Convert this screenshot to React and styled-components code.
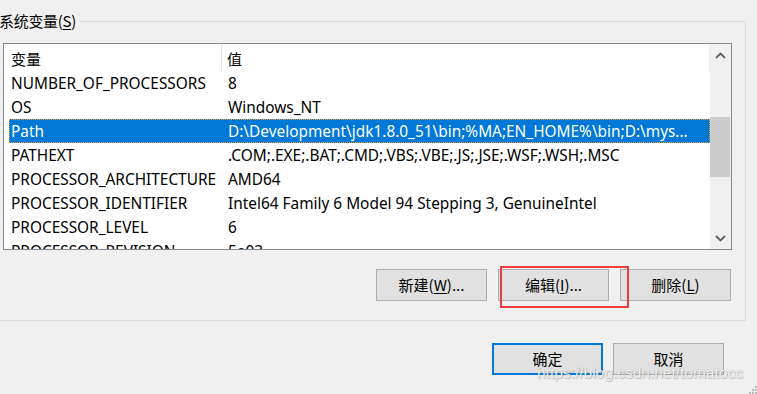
import React from "react";
import styled, { createGlobalStyle } from "styled-components";

const Global = createGlobalStyle`
  html, body { margin: 0; padding: 0; background: #f0f0f0; overflow: hidden; }
  body { font-family: "Noto Sans", "Noto Sans CJK SC", sans-serif; }
`;

const FONT = `"Noto Sans", "Noto Sans CJK SC", sans-serif`;

const Page = styled.div`
  position: relative;
  width: 757px;
  height: 394px;
  background: #f0f0f0;
  overflow: hidden;
  font-family: ${FONT};
  font-size: 15px;
  color: #000;
`;

const GroupBox = styled.div`
  position: relative;
  margin: 21px 0 0 -12px;
  width: 758px;
  height: 300px;
  border: 1px solid #dcdcdc;
  padding: 21px 15px 0 14px;
  box-sizing: border-box;
  display: flex;
  flex-direction: column;
`;

const Legend = styled.div`
  position: absolute;
  top: -11px;
  left: 10px;
  padding: 0 3px 0 0;
  background: #f0f0f0;
  line-height: 20px;
  font-size: 15px;
  font-family: "Noto Sans CJK SC", sans-serif;
  letter-spacing: -0.3px;
`;

const ListBox = styled.div`
  width: 729px;
  height: 207px;
  border: 1px solid #828790;
  box-sizing: border-box;
  background: #fff;
  display: flex;
  overflow: hidden;
`;

const ListMain = styled.div`
  flex: 1;
  display: flex;
  flex-direction: column;
  overflow: hidden;
`;

const Header = styled.div`
  height: 27px;
  display: flex;
  align-items: stretch;
  flex-shrink: 0;
`;

const HeadCell = styled.div`
  width: ${(p) => p.$w}px;
  flex: ${(p) => (p.$w ? "none" : "1")};
  padding-left: ${(p) => p.$pad}px;
  display: flex;
  align-items: center;
  border-right: 1px solid ${(p) => p.$sep || "transparent"};
  margin: 1px 0 0;
  font-family: "Noto Sans CJK SC", sans-serif;
  box-sizing: border-box;
`;

const Row = styled.div`
  height: 24px;
  flex-shrink: 0;
  margin-left: 5px;
  display: flex;
  align-items: center;
  box-sizing: border-box;
  font-size: 15.4px;
  background: ${(p) => (p.$selected ? "#0078d7" : "transparent")};
  color: ${(p) => (p.$selected ? "#fff" : "#000")};
  outline: ${(p) => (p.$selected ? "1px dotted #f29a3a" : "none")};
  outline-offset: -1px;
  white-space: nowrap;
  overflow: hidden;
`;

const Cell = styled.div`
  width: ${(p) => (p.$w ? p.$w + "px" : "auto")};
  flex: ${(p) => (p.$w ? "none" : "1")};
  padding-left: 2px;
  box-sizing: border-box;
  overflow: hidden;
  white-space: nowrap;
`;

const ScrollBar = styled.div`
  width: 21px;
  background: #f0f0f0;
  display: flex;
  flex-direction: column;
  align-items: center;
  position: relative;
`;

const Arrow = styled.div`
  height: 22px;
  width: 100%;
  display: flex;
  align-items: center;
  justify-content: center;
  flex-shrink: 0;
`;

const Track = styled.div`
  flex: 1;
  width: 100%;
  position: relative;
`;

const Thumb = styled.div`
  position: absolute;
  left: 0;
  right: 1px;
  top: 51px;
  height: 60px;
  background: #cdcdcd;
`;

const ButtonRow = styled.div`
  display: flex;
  justify-content: flex-end;
  gap: 11px;
  margin-top: 19px;
  width: 728px;
`;

const BottomRow = styled.div`
  display: flex;
  justify-content: flex-end;
  gap: 10px;
  margin: 22px 33px 0 0;
`;

const Btn = styled.div`
  position: relative;
  width: 111px;
  height: 32px;
  box-sizing: border-box;
  background: #e1e1e1;
  border: ${(p) => (p.$default ? "2px solid #0078d7" : "1px solid #adadad")};
  display: flex;
  align-items: center;
  justify-content: center;
  font-family: "Noto Sans CJK SC", sans-serif;
  font-size: 15px;
  padding-bottom: 1px;
  z-index: ${(p) => (p.$marked ? 2 : "auto")};
`;

const U = styled.span`
  text-decoration: underline;
  text-underline-offset: 2px;
`;

const Annotation = styled.div`
  position: absolute;
  left: 1px;
  top: -4px;
  width: 129px;
  height: 42px;
  border: 2px solid #f03c3c;
  box-sizing: border-box;
  pointer-events: none;
  z-index: 3;
`;

const Watermark = styled.div`
  position: absolute;
  left: 537px;
  top: 364px;
  white-space: nowrap;
  font-family: "Liberation Sans", Arial, sans-serif;
  font-size: 15.5px;
  color: rgba(255, 255, 255, 0.85);
  text-shadow: 0 0 1px rgba(120, 120, 120, 0.6), 1px 1px 1px rgba(140, 140, 140, 0.5);
`;

const Grip = styled.svg`
  position: absolute;
  right: 0;
  bottom: 0;
`;

const rows = [
  ["NUMBER_OF_PROCESSORS", "8"],
  ["OS", "Windows_NT"],
  ["Path", "D:\\Development\\jdk1.8.0_51\\bin;%MA;EN_HOME%\\bin;D:\\mys..."],
  ["PATHEXT", ".COM;.EXE;.BAT;.CMD;.VBS;.VBE;.JS;.JSE;.WSF;.WSH;.MSC"],
  ["PROCESSOR_ARCHITECTURE", "AMD64"],
  ["PROCESSOR_IDENTIFIER", "Intel64 Family 6 Model 94 Stepping 3, GenuineIntel"],
  ["PROCESSOR_LEVEL", "6"],
  ["PROCESSOR_REVISION", "5e03"],
];

export default function App() {
  return (
    <Page>
      <Global />
      <GroupBox>
        <Legend>
          系统变量(<U>S</U>)
        </Legend>
        <ListBox>
          <ListMain>
            <Header>
              <HeadCell $w={218} $pad={7} $sep="#e5e5e5">变量</HeadCell>
              <HeadCell $pad={5} $sep="#eeeeee">值</HeadCell>
            </Header>
            {rows.map(([k, v], i) => (
              <Row key={k} $selected={i === 2}>
                <Cell $w={217}>{k}</Cell>
                <Cell>{v}</Cell>
              </Row>
            ))}
          </ListMain>
          <ScrollBar>
            <Arrow>
              <svg width="11" height="7" viewBox="0 0 11 7">
                <path d="M1 6 L5.5 1.5 L10 6" fill="none" stroke="#606060" strokeWidth="1.8" />
              </svg>
            </Arrow>
            <Track>
              <Thumb />
            </Track>
            <Arrow>
              <svg width="11" height="7" viewBox="0 0 11 7">
                <path d="M1 1 L5.5 5.5 L10 1" fill="none" stroke="#606060" strokeWidth="1.8" />
              </svg>
            </Arrow>
          </ScrollBar>
        </ListBox>
        <ButtonRow>
          <Btn>新建(<U>W</U>)...</Btn>
          <Btn $marked>
            编辑(<U>I</U>)...
            <Annotation />
          </Btn>
          <Btn>删除(<U>L</U>)</Btn>
        </ButtonRow>
      </GroupBox>
      <BottomRow>
        <Btn $default>确定</Btn>
        <Btn>取消</Btn>
      </BottomRow>
      <Watermark>https://blog.csdn.net/tomatocc</Watermark>
      <Grip width="8" height="8" viewBox="0 0 8 8">
        <rect x="6" y="0" width="2" height="2" fill="#b8b8b8" />
        <rect x="3" y="3" width="2" height="2" fill="#b8b8b8" />
        <rect x="6" y="3" width="2" height="2" fill="#b8b8b8" />
        <rect x="0" y="6" width="2" height="2" fill="#b8b8b8" />
        <rect x="3" y="6" width="2" height="2" fill="#b8b8b8" />
        <rect x="6" y="6" width="2" height="2" fill="#b8b8b8" />
      </Grip>
    </Page>
  );
}
